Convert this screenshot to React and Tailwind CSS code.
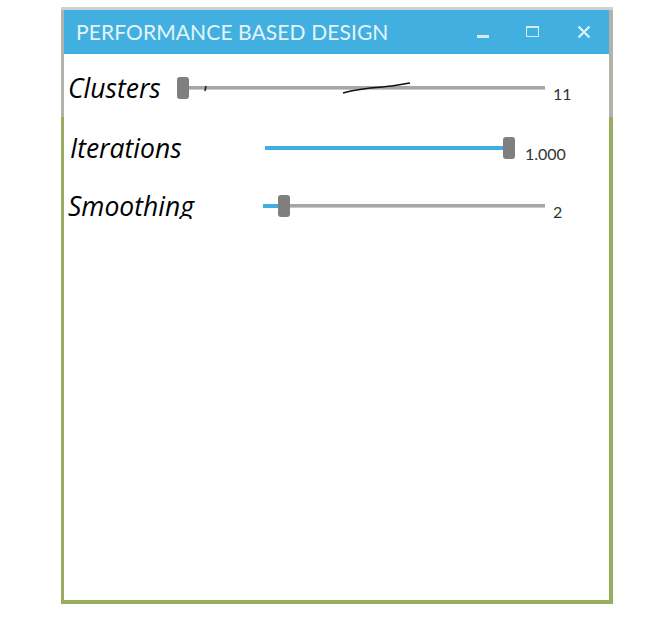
import React from 'react';

const Slider = ({ width, thumb, fill, marks }) => (
  <div className="relative h-[22px] shrink-0" style={{ width }}>
    <div className="absolute left-0 right-0 top-[9px] h-[4px] bg-[#a6a6a6] border-b border-[#c9c9c9]" />
    {fill > 0 && (
      <div className="absolute left-0 top-[9px] h-[4px] bg-[#41aee0]" style={{ width: fill }} />
    )}
    <div className="absolute top-0 w-[12px] h-[22px] rounded-[3px] bg-[#7f7f7f]" style={{ left: thumb }} />
    {marks}
  </div>
);

const Row = ({ label, labelW, pl, slider, value, gap, className }) => (
  <div className={`flex items-center h-[58px] ${className}`}>
    <div
      className="shrink-0 italic text-[26.5px] leading-none text-black"
      style={{ width: labelW, paddingLeft: pl, fontFamily: '"Open Sans", "Noto Sans", sans-serif' }}
    >
      {label}
    </div>
    {slider}
    <div className="text-[16px] leading-none text-[#333] pt-[11px]" style={{ marginLeft: gap }}>
      {value}
    </div>
  </div>
);

export default function App() {
  const scribble = (
    <svg className="absolute left-0 top-0 overflow-visible" width="368" height="22">
      <path d="M29 9 L28 14" stroke="#222" strokeWidth="1.6" fill="none" />
      <path d="M166 16 C180 12, 192 11, 205 10 S222 8, 233 6" stroke="#111" strokeWidth="1.5" fill="none" />
    </svg>
  );

  return (
    <div className="w-[650px] h-[624px] bg-white pt-[7px] pl-[61px]" style={{ fontFamily: 'Lato, "Open Sans", sans-serif' }}>
      <div className="w-[552px] h-[597px] pt-[3px] pl-[3px] pr-[4px] pb-[4px] bg-[linear-gradient(to_bottom,#d3d1ce_0,#d3d1ce_3px,#b5b2ad_3px,#b5b2ad_110px,#98ad5e_110px)]">
        <div className="w-full h-full bg-white flex flex-col">
          <div className="h-[44px] bg-[#41afe0] flex items-center pl-[12px] shrink-0">
            <div className="text-[21px] text-[#e4f4fb] tracking-[0.1px] flex-1">PERFORMANCE BASED DESIGN</div>
            <div className="flex items-center">
              <div className="w-[12px] h-[3px] bg-[#d2ecf8] mt-[8px]" />
              <div className="ml-[37px] w-[13px] h-[11px] border border-t-2 border-[#d2ecf8] -mt-[2px]" />
              <svg className="ml-[38px] mr-[18px]" width="14" height="14" viewBox="0 0 14 14">
                <path d="M1.5 1.5 L12.5 12.5 M12.5 1.5 L1.5 12.5" stroke="#d8eff9" strokeWidth="2.4" />
              </svg>
            </div>
          </div>
          <div className="h-[165px] overflow-hidden shrink-0">
            <Row
              className="mt-[5px]"
              label="Clusters"
              labelW={113}
              pl={4}
              slider={<Slider width={368} thumb={0} fill={0} marks={scribble} />}
              value="11"
              gap={8}
            />
            <Row
              className="mt-[2px]"
              label="Iterations"
              labelW={201}
              pl={6}
              slider={<Slider width={250} thumb={238} fill={240} />}
              value="1.000"
              gap={10}
            />
            <Row
              label="Smoothing"
              labelW={199}
              pl={4}
              slider={<Slider width={282} thumb={15} fill={15} />}
              value="2"
              gap={8}
            />
          </div>
        </div>
      </div>
    </div>
  );
}
